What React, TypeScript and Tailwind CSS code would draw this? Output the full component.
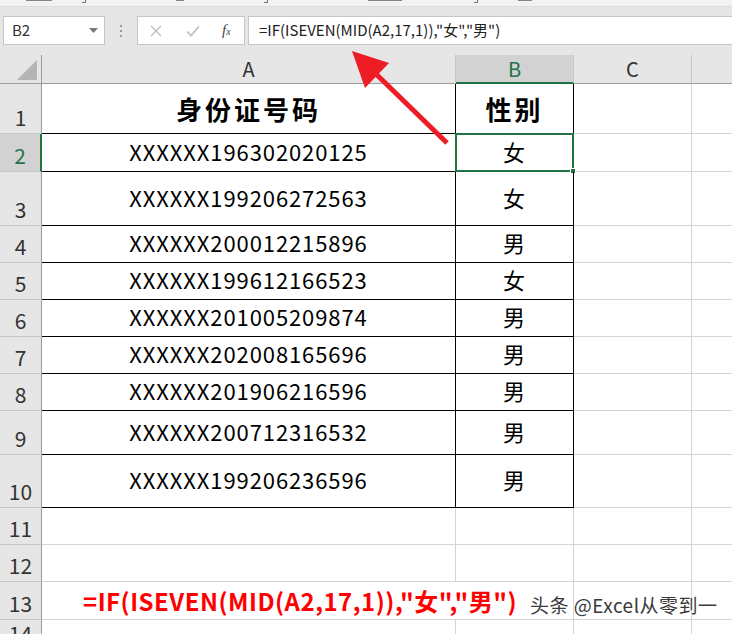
import React from 'react';

interface Row {
  n: number;
  h: string;
  a?: string;
  b?: string;
  head?: boolean;
  formula?: boolean;
}

const rows: Row[] = [
  { n: 1, h: 'h-[50px]', a: '身份证号码', b: '性别', head: true },
  { n: 2, h: 'h-[38px]', a: 'XXXXXX196302020125', b: '女' },
  { n: 3, h: 'h-[54px]', a: 'XXXXXX199206272563', b: '女' },
  { n: 4, h: 'h-[37px]', a: 'XXXXXX200012215896', b: '男' },
  { n: 5, h: 'h-[37px]', a: 'XXXXXX199612166523', b: '女' },
  { n: 6, h: 'h-[37px]', a: 'XXXXXX201005209874', b: '男' },
  { n: 7, h: 'h-[37px]', a: 'XXXXXX202008165696', b: '男' },
  { n: 8, h: 'h-[37px]', a: 'XXXXXX201906216596', b: '男' },
  { n: 9, h: 'h-[44px]', a: 'XXXXXX200712316532', b: '男' },
  { n: 10, h: 'h-[53px]', a: 'XXXXXX199206236596', b: '男' },
  { n: 11, h: 'h-[37px]' },
  { n: 12, h: 'h-[37px]' },
  { n: 13, h: 'h-[38px]', formula: true },
  { n: 14, h: 'h-[30px]' },
];

const FORMULA = '=IF(ISEVEN(MID(A2,17,1)),"女","男")';

const font = "font-['Noto_Sans_CJK_SC','Noto_Sans',sans-serif]";

// Ribbon edge that is cut off at the top of the screenshot (only glyph bottoms show)
const RibbonEdge = () => (
  <div className="h-[7px] bg-[#f3f2f1] border-b border-[#dcdcdc] flex items-start">
    <span className="ml-[26px] w-[26px] h-[1px] bg-[#888]" />
    <span className="ml-[30px] w-[4px] h-[3px] border-r border-b border-[#777]" />
    <span className="ml-[90px] w-[8px] h-[1px] bg-[#888]" />
    <span className="ml-[80px] w-[4px] h-[3px] border-r border-b border-[#777]" />
    <span className="ml-[100px] w-[34px] h-[1px] bg-[#888]" />
    <span className="ml-[72px] w-[4px] h-[3px] border-r border-b border-[#777]" />
    <span className="ml-[40px] w-[14px] h-[1px] bg-[#888]" />
  </div>
);

const FormulaBar = () => (
  <div className={`h-[48px] bg-[#e6e6e6] flex items-start pt-[9px] ${font}`}>
    <div className="ml-[3px] w-[102px] h-[29px] bg-white border border-[#c6c6c6] flex items-center justify-between pl-[8px] pr-[6px]">
      <span className="text-[15px] text-[#333]">B2</span>
      <svg width="9" height="6" viewBox="0 0 9 6">
        <path d="M0 0 L9 0 L4.5 5 Z" fill="#777" />
      </svg>
    </div>
    <div className="w-[32px] h-[29px] flex flex-col items-center justify-center gap-[3px]">
      <span className="w-[2px] h-[2px] bg-[#999]" />
      <span className="w-[2px] h-[2px] bg-[#999]" />
      <span className="w-[2px] h-[2px] bg-[#999]" />
    </div>
    <div className="w-[108px] h-[29px] bg-white border border-[#c6c6c6] flex items-center">
      <svg className="ml-[12px]" width="12" height="12" viewBox="0 0 12 12">
        <path d="M1 1 L11 11 M11 1 L1 11" stroke="#bdbdbd" strokeWidth="1.3" />
      </svg>
      <svg className="ml-[24px]" width="14" height="12" viewBox="0 0 14 12">
        <path d="M1 6.5 L5 10.5 L13 1.5" stroke="#bdbdbd" strokeWidth="1.6" fill="none" />
      </svg>
      <span className="ml-[22px] font-['Liberation_Serif',serif] italic text-[15px] text-[#444] leading-none">
        f<span className="text-[10px]">x</span>
      </span>
    </div>
    <div className="ml-[3px] flex-1 h-[29px] bg-white border border-[#c6c6c6] border-r-0 flex items-center pl-[10px] text-[15px] text-[#222]">
      {FORMULA}
    </div>
  </div>
);

const ColumnHeaders = () => (
  <div className={`flex h-[29px] ${font} text-[20px] text-[#333]`}>
    <div className="w-[42px] bg-[#e6e6e6] border-r border-b border-[#9c9c9c] flex items-end justify-end pr-[4px] pb-[3px]">
      <svg width="20" height="20" viewBox="0 0 20 20">
        <path d="M20 0 L20 20 L0 20 Z" fill="#b5b5b5" />
      </svg>
    </div>
    <div className="w-[414px] bg-[#e6e6e6] border-r border-b border-r-[#c6c6c6] border-b-[#9c9c9c] flex items-center justify-center">A</div>
    <div className="w-[118px] bg-[#d2d2d2] border-r border-r-[#c6c6c6] border-b-2 border-b-[#217346] flex items-center justify-center text-[#217346]">B</div>
    <div className="w-[118px] bg-[#e6e6e6] border-r border-b border-r-[#c6c6c6] border-b-[#9c9c9c] flex items-center justify-center">C</div>
    <div className="flex-1 bg-[#e6e6e6] border-b border-[#9c9c9c]" />
  </div>
);

const SheetRow = ({ row }: { row: Row }) => {
  const boxed = row.n <= 10;
  const selected = row.n === 2;
  const cellBorder = boxed ? 'border-r border-b border-black' : 'border-r border-b border-[#d4d4d4]';
  const cellText = row.head
    ? 'text-[26px] font-bold tracking-[3px] text-black'
    : 'text-[22px] tracking-[0.9px] text-black pb-[3px]';
  return (
    <div className={`flex ${row.h} ${font}`}>
      <div
        className={`w-[42px] shrink-0 border-b border-b-[#c6c6c6] flex items-end justify-center pb-[1px] text-[21px] leading-[30px] ${
          selected ? 'bg-[#d2d2d2] text-[#217346] border-r-2 border-r-[#217346]' : 'bg-[#e6e6e6] text-[#333] border-r border-r-[#9c9c9c]'
        }`}
      >
        {row.n}
      </div>
      {row.formula ? (
        <div className="w-[532px] shrink-0 flex">
          <div className="w-[414px] border-b border-[#d4d4d4] flex items-center pl-[41px] whitespace-nowrap text-[24px] tracking-[0.5px] font-bold text-[#ff0000]">
            <span className="relative z-10">{FORMULA}</span>
          </div>
          <div className="w-[118px] border-r border-b border-[#d4d4d4]" />
        </div>
      ) : (
        <>
          <div className={`w-[414px] shrink-0 ${cellBorder} flex items-center justify-center ${cellText}`}>{row.a}</div>
          <div className={`w-[118px] shrink-0 relative ${cellBorder} flex items-center justify-center ${cellText}`}>
            {row.b}
            {selected && (
              <div className="absolute -left-[1px] -top-[1px] -right-[1px] -bottom-[1px] border-2 border-[#217346]">
                <div className="absolute -right-[4px] -bottom-[4px] w-[6px] h-[6px] bg-[#217346] border border-white" />
              </div>
            )}
          </div>
        </>
      )}
      <div className="w-[118px] shrink-0 border-r border-b border-[#d4d4d4]" />
      <div className="flex-1 border-b border-[#d4d4d4]" />
    </div>
  );
};

const App = () => {
  return (
    <div className="relative w-[732px] h-[634px] overflow-hidden bg-white">
      <RibbonEdge />
      <FormulaBar />
      <ColumnHeaders />
      {rows.map((row) => (
        <SheetRow key={row.n} row={row} />
      ))}

      {/* red arrow pointing at the formula */}
      <svg className="absolute left-0 top-0 pointer-events-none" width="732" height="634" viewBox="0 0 732 634">
        <line x1="447" y1="143" x2="374" y2="72" stroke="#ee1c25" strokeWidth="5" />
        <path d="M352 51 L389 63 L365 88 Z" fill="#ee1c25" />
      </svg>

      {/* watermark */}
      <div className="absolute left-[530px] top-[591px] font-['Noto_Sans_CJK_SC',sans-serif] text-[19px] tracking-[0.5px] text-[#3a3a3a] [text-shadow:0_0_2px_#fff,0_0_2px_#fff]">
        头条 @Excel从零到一
      </div>
    </div>
  );
};

export default App;
